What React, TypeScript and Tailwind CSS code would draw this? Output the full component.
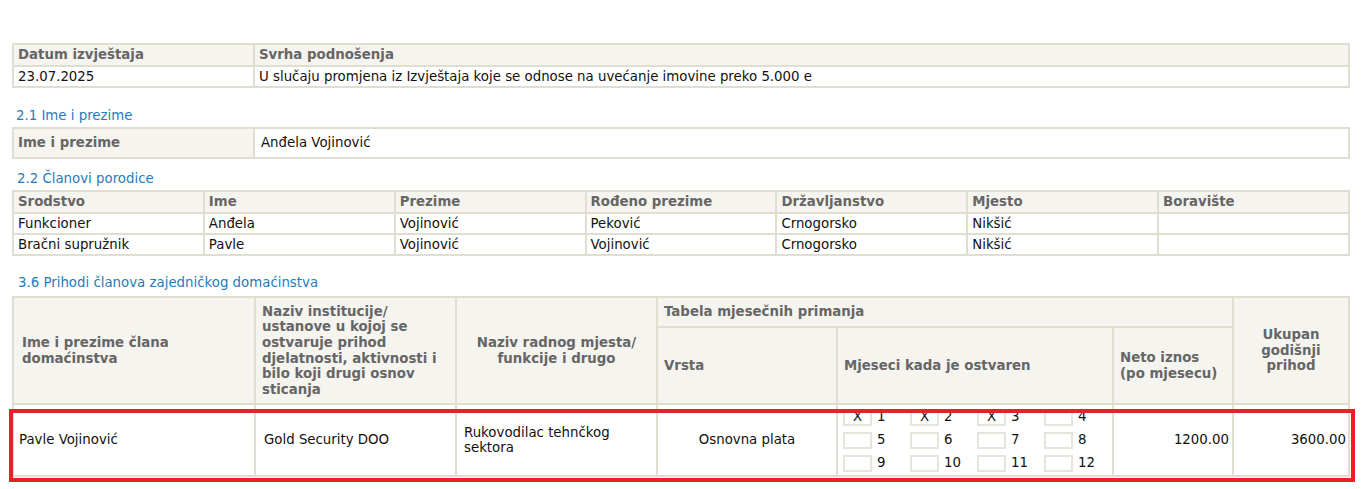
const font = { fontFamily: '"DejaVu Sans", Verdana, sans-serif' }

const bd = 'border-2 border-[#e0ddd1]'
const th = `${bd} bg-[#f5f4ef] font-bold text-[#666666] text-left align-middle`
const td = `${bd} bg-white text-[#111111] text-left align-middle`

const family = [
  ['Funkcioner', 'Anđela', 'Vojinović', 'Peković', 'Crnogorsko', 'Nikšić', ''],
  ['Bračni supružnik', 'Pavle', 'Vojinović', 'Vojinović', 'Crnogorsko', 'Nikšić', ''],
]

const months = [1, 2, 3, 4, 5, 6, 7, 8, 9, 10, 11, 12]
const paid = [1, 2, 3]

function Title({ children, className }: { children: React.ReactNode; className: string }) {
  return <p className={`text-[13.33px] leading-[16px] text-[#1f7bbd] ${className}`}>{children}</p>
}

export default function App() {
  return (
    <div className="min-h-[489px] bg-white px-[12px] pt-[43px] text-[13.33px] leading-[1.17]" style={font}>
      <table className="w-[1338px] table-fixed border-collapse">
        <colgroup>
          <col className="w-[241px]" />
          <col />
        </colgroup>
        <tbody>
          <tr>
            <th className={`${th} h-[22px] px-[4px] py-0`}>Datum izvještaja</th>
            <th className={`${th} h-[22px] px-[4px] py-0`}>Svrha podnošenja</th>
          </tr>
          <tr>
            <td className={`${td} h-[21px] px-[4px] py-0`}>23.07.2025</td>
            <td className={`${td} h-[21px] px-[4px] py-0`}>
              U slučaju promjena iz Izvještaja koje se odnose na uvećanje imovine preko 5.000 e
            </td>
          </tr>
        </tbody>
      </table>

      <Title className="mt-[20px] mb-[3px] pl-[4px]">2.1 Ime i prezime</Title>
      <table className="w-[1338px] table-fixed border-collapse">
        <colgroup>
          <col className="w-[241px]" />
          <col />
        </colgroup>
        <tbody>
          <tr>
            <th className={`${th} h-[30px] px-[4px] py-0`}>Ime i prezime</th>
            <td className={`${td} h-[30px] px-[6px] py-0`}>Anđela Vojinović</td>
          </tr>
        </tbody>
      </table>

      <Title className="mt-[12px] mb-[3px] pl-[5px]">2.2 Članovi porodice</Title>
      <table className="w-[1338px] table-fixed border-collapse">
        <thead>
          <tr>
            {['Srodstvo', 'Ime', 'Prezime', 'Rođeno prezime', 'Državljanstvo', 'Mjesto', 'Boravište'].map((h) => (
              <th key={h} className={`${th} h-[22px] px-[4px] py-0`}>
                {h}
              </th>
            ))}
          </tr>
        </thead>
        <tbody>
          {family.map((row, i) => (
            <tr key={i}>
              {row.map((c, j) => (
                <td key={j} className={`${td} h-[21px] px-[4px] py-0`}>
                  {c}
                </td>
              ))}
            </tr>
          ))}
        </tbody>
      </table>

      <Title className="mt-[19px] mb-[5px] pl-[6px]">3.6 Prihodi članova zajedničkog domaćinstva</Title>
      <div className="relative w-[1338px]">
        <table className="w-[1338px] table-fixed border-collapse">
          <colgroup>
            <col className="w-[242px]" />
            <col className="w-[201px]" />
            <col className="w-[201px]" />
            <col className="w-[180px]" />
            <col className="w-[276px]" />
            <col className="w-[120px]" />
            <col />
          </colgroup>
          <thead>
            <tr>
              <th rowSpan={2} className={`${th} px-[8px] py-0`}>
                Ime i prezime člana
                <br />
                domaćinstva
              </th>
              <th rowSpan={2} className={`${th} whitespace-nowrap px-[6px] py-0`}>
                Naziv institucije/
                <br />
                ustanove u kojoj se
                <br />
                ostvaruje prihod
                <br />
                djelatnosti, aktivnosti i
                <br />
                bilo koji drugi osnov
                <br />
                sticanja
              </th>
              <th rowSpan={2} className={`${th} !text-center px-[6px] py-0`}>
                Naziv radnog mjesta/
                <br />
                funkcije i drugo
              </th>
              <th colSpan={3} className={`${th} h-[30px] px-[6px] py-0`}>
                Tabela mjesečnih primanja
              </th>
              <th rowSpan={2} className={`${th} !text-center px-[4px] py-0`}>
                Ukupan
                <br />
                godišnji
                <br />
                prihod
              </th>
            </tr>
            <tr>
              <th className={`${th} h-[77px] px-[6px] py-0`}>Vrsta</th>
              <th className={`${th} h-[77px] px-[6px] py-0`}>Mjeseci kada je ostvaren</th>
              <th className={`${th} h-[77px] px-[6px] py-0`}>
                Neto iznos
                <br />
                (po mjesecu)
              </th>
            </tr>
          </thead>
          <tbody>
            <tr>
              <td className={`${td} h-[72px] px-[5px] py-0`}>Pavle Vojinović</td>
              <td className={`${td} h-[72px] px-[8px] py-0`}>Gold Security DOO</td>
              <td className={`${td} h-[72px] px-[7px] py-0 leading-[15px]`}>Rukovodilac tehnčkog sektora</td>
              <td className={`${td} !text-center h-[72px] px-[4px] py-0`}>Osnovna plata</td>
              <td className={`${td} h-[72px] px-[5px] py-[3px]`}>
                <div className="grid grid-cols-[repeat(4,67px)] gap-y-[6px]">
                  {months.map((m) => (
                    <div key={m} className="flex items-center gap-[5px]">
                      <span className="flex h-[17px] w-[29px] items-center justify-center border-2 border-[#e6e4dc] bg-white leading-none">
                        {paid.includes(m) ? 'X' : ''}
                      </span>
                      <span className="leading-none">{m}</span>
                    </div>
                  ))}
                </div>
              </td>
              <td className={`${td} !text-right h-[72px] px-[3px] py-0`}>1200.00</td>
              <td className={`${td} !text-right h-[72px] px-[2px] py-0`}>3600.00</td>
            </tr>
          </tbody>
        </table>
        <div className="pointer-events-none absolute -bottom-[5px] -left-[3px] -right-[5px] h-[73px] border-4 border-[#e8202a]" />
      </div>
    </div>
  )
}
